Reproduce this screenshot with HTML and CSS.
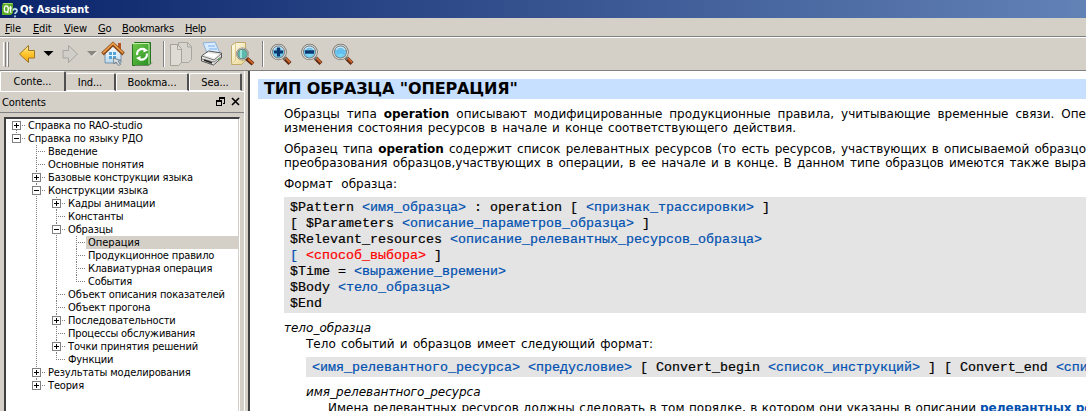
FILE: index.html
```html
<!DOCTYPE html>
<html lang="ru">
<head>
<meta charset="utf-8">
<title>Qt Assistant</title>
<link rel="stylesheet" href="styles.css">
</head>
<body>
<div class="window">
  <header class="titlebar">
    <svg class="app-icon" width="16" height="16" viewBox="0 0 16 16"><path d="M2 1h9v10l-2 2H0V3z" fill="#5fae2b"/><path d="M2 1h9l-2 1H0z" fill="#a5d867"/><ellipse cx="4.3" cy="7" rx="2" ry="3.200" fill="none" stroke="#fff" stroke-width="1.300"/><path d="M4.800 9.500l1.500 1.700M8.500 4v5.500q0 1 1 .7M7 6h3" fill="none" stroke="#fff" stroke-width="1.200"/><path d="M10.800 8.300q2-2.600 4-.6q.8 1.700-1 2.900q-.8.600-.8 1.500M13 13.600v1.600" fill="none" stroke="#4c7ca8" stroke-width="2.200"/><path d="M10.800 8.300q2-2.600 4-.6q.8 1.700-1 2.900q-.8.600-.8 1.500M13 13.600v1.600" fill="none" stroke="#e4f3fb" stroke-width="1.100"/></svg>
    <span class="app-title">Qt Assistant</span>
  </header>
  <nav class="menubar">
    <span class="m-file"><u>F</u>ile</span><span class="m-edit"><u>E</u>dit</span><span class="m-view"><u>V</u>iew</span><span class="m-go"><u>G</u>o</span><span class="m-book"><u>B</u>ookmarks</span><span class="m-help"><u>H</u>elp</span>
  </nav>
  <div class="toolbar">
    <svg width="360" height="32" viewBox="0 38 360 32">
      <defs>
        <linearGradient id="gold" x1="0" y1="0" x2="0" y2="1"><stop offset="0" stop-color="#fff0a0"/><stop offset=".5" stop-color="#ffc52c"/><stop offset="1" stop-color="#f5a40c"/></linearGradient>
        <linearGradient id="green" x1="0" y1="0" x2="1" y2="1"><stop offset="0" stop-color="#73cb4b"/><stop offset="1" stop-color="#238c20"/></linearGradient>
        <linearGradient id="sheet" x1="0" y1="0" x2="1" y2="1"><stop offset="0" stop-color="#fffdf0"/><stop offset="1" stop-color="#ead68c"/></linearGradient>
        <linearGradient id="wall" x1="0" y1="0" x2="0" y2="1"><stop offset="0" stop-color="#fff"/><stop offset="1" stop-color="#b9d8ee"/></linearGradient>
        <radialGradient id="lens" cx=".5" cy=".65" r=".65"><stop offset="0" stop-color="#7ce0fa"/><stop offset="1" stop-color="#6aa9d8"/></radialGradient>
        <g id="magnifier">
          <path d="M14.500 15l5.500 5.500" stroke="#5e2a12" stroke-width="4.200"/>
          <path d="M15 14.500l5 5" stroke="#c9662f" stroke-width="2"/>
          <path d="M12.500 13l3 3" stroke="#777" stroke-width="3"/>
          <circle cx="8.500" cy="9" r="7" fill="url(#lens)" stroke="#706f6b" stroke-width="2.600"/>
          <circle cx="8.500" cy="9" r="7" fill="none" stroke="#d8d7d2" stroke-width="1.200"/>
          <path d="M4 7a5 5 0 0 1 9 0" fill="none" stroke="#c7e6f7" stroke-width="1.200"/>
        </g>
      </defs>
      <g shape-rendering="crispEdges"><path d="M3.500 42v24M7.500 42v24" stroke="#fff"/><path d="M5.500 42v25M8.500 42v25" stroke="#808080"/><path d="M163.500 41v26M262.500 41v26" stroke="#808080"/><path d="M164.500 41v26M263.500 41v26" stroke="#fff"/></g>
      <path d="M19.500 54l9-8.500v5h6v7.500h-6v4.500z" fill="url(#gold)" stroke="#9b7424" stroke-linejoin="round"/>
      <path d="M43.500 51h10l-5 5z" fill="#000"/>
      <path d="M77.500 54l-9-8.500v5h-5.500v7.500h5.500v4.500z" fill="#d0cec9" stroke="#a7a5a0" stroke-linejoin="round"/>
      <path d="M87 51h10l-5 5z" fill="#8a8780"/><path d="M92 56.500l5-5" stroke="#fff"/>
      <path d="M105 52v11h16V52l-8-7z" fill="url(#wall)" stroke="#7893ab"/>
      <path d="M118 43h3v7l-3-3z" fill="#b85423"/>
      <path d="M102.500 54l10.500-10 10.500 10" fill="none" stroke="#8b4a1c" stroke-width="3.800"/>
      <path d="M103 53l10-9.500 10 9.500" fill="none" stroke="#eda047" stroke-width="1.700"/>
      <path d="M109 52h7v7h-7z" fill="#54a1d5"/><path d="M112.500 51v9M108 55.500h9" stroke="#e8f7ff"/>
      <path d="M113 58l1 6 2-2 2.500 3.500 2-1-2.500-3.500 3-.5z" fill="#d6dce1" stroke="#65717a" stroke-width=".8"/>
      <path d="M132.500 44.500l2-2h16v21l-2 2h-16z" fill="url(#green)" stroke="#25751f"/>
      <path d="M149 44v20.500M133 43.500h16" stroke="#c3ecaa"/><path d="M135 65.500h14l3-3" fill="none" stroke="#6b8263"/>
      <path d="M137.200 55a5 5 0 0 1 7.500-5.300M146.800 53.500a5 5 0 0 1-7.500 5.300" fill="none" stroke="#fff" stroke-width="2"/><path d="M143.500 47.500l4.500 3-4.500 2zM140.500 61l-4.500-3 4.500-2z" fill="#fff"/>
      <path d="M178.500 42.500h9l4 4v13l-3 3h-10z" fill="#d7d4ce" stroke="#aaa7a1"/><path d="M170.500 44.500h7l4 4v14l-3 3h-8z" fill="#dedbd5" stroke="#a5a29c"/><path d="M177.500 44.500v5h4M187.500 43v4h4" fill="none" stroke="#aaa7a1"/>
      <path d="M203 43l12-1 5 11-12 2z" fill="#d8ecff" stroke="#7ca3d4" stroke-width=".8"/><path d="M208 46h7M209 49h8" stroke="#7baee7"/>
      <path d="M201.500 56l7-5 13 2v5l-8 7-12-4z" fill="#e8e8e4" stroke="#555"/><path d="M202 56l12 4 7-6M202 59l12 3 7-5" fill="none" stroke="#77777a"/><path d="M207 53l12 2-5 3-10-3z" fill="#fff"/><path d="M204 60l8 3" stroke="#222" stroke-width="1.500"/><path d="M218 59h2" stroke="#47a947" stroke-width="1.500"/>
      <path d="M231.500 45.500l4-3h10v18l-4 4h-10z" fill="url(#sheet)" stroke="#bea968"/><path d="M235.500 43v17l-4 4" fill="none" stroke="#e0ca8b"/>
      <path d="M246 58l7 6" stroke="#5d260d" stroke-width="4.200"/><path d="M248 59l5 4.500" stroke="#d26428" stroke-width="2"/><circle cx="242.500" cy="54" r="5.500" fill="#5cb9ad" stroke="#777770" stroke-width="2"/><circle cx="242.500" cy="54" r="5.700" fill="none" stroke="#d3d1ca" stroke-width=".8"/><path d="M241 50v8" stroke="#a3e3dc" stroke-width="2"/>
      <use href="#magnifier" x="270" y="43"/><use href="#magnifier" x="301" y="43"/><use href="#magnifier" x="332" y="43"/>
      <path d="M278.500 47.500v9M274 52h9" stroke="#08366d" stroke-width="3.200"/><path d="M305 52h9" stroke="#08366d" stroke-width="3.400"/><path d="M336.500 52h8" stroke="#62bff0" stroke-width="4"/>
    </svg>
  </div>
  <main class="workspace">
    <aside class="sidebar">
      <div class="tabs"><span class="tab active">Conte...</span><span class="tab t-index">Ind...</span><span class="tab t-book">Bookma...</span><span class="tab t-search">Sea...</span></div>
      <div class="dock-title"><span>Contents</span>
        <svg width="24" height="10" viewBox="0 0 24 10" shape-rendering="crispEdges"><path d="M3.500 4V1.500h5V6H7M3 1h6M.5 4.500h5v4h-5zM0 4h6" fill="none" stroke="#000"/><path d="M3 0h6v2H3zM0 3h6v2H0z"/><path d="M16 1l7 7M23 1l-7 7" stroke="#000" stroke-width="1.600" shape-rendering="auto"/></svg>
      </div>
      <div class="tree">
        <ul class="root">
          <li><div class="row"><i class="box plus"></i><span>Справка по RAO-studio</span></div></li>
          <li><div class="row"><i class="box"></i><span>Справка по языку РДО</span></div>
            <ul>
              <li><div class="row"><span>Введение</span></div></li>
              <li><div class="row"><span>Основные понятия</span></div></li>
              <li><div class="row"><i class="box plus"></i><span>Базовые конструкции языка</span></div></li>
              <li><div class="row"><i class="box"></i><span>Конструкции языка</span></div>
                <ul>
                  <li><div class="row"><i class="box plus"></i><span>Кадры анимации</span></div></li>
                  <li><div class="row"><span>Константы</span></div></li>
                  <li><div class="row"><i class="box"></i><span>Образцы</span></div>
                    <ul>
                      <li><div class="row selected"><span>Операция</span></div></li>
                      <li><div class="row"><span>Продукционное правило</span></div></li>
                      <li><div class="row"><span>Клавиатурная операция</span></div></li>
                      <li><div class="row"><span>События</span></div></li>
                    </ul>
                  </li>
                  <li><div class="row"><span>Объект описания показателей</span></div></li>
                  <li><div class="row"><span>Объект прогона</span></div></li>
                  <li><div class="row"><i class="box plus"></i><span>Последовательности</span></div></li>
                  <li><div class="row"><span>Процессы обслуживания</span></div></li>
                  <li><div class="row"><i class="box plus"></i><span>Точки принятия решений</span></div></li>
                  <li><div class="row"><span>Функции</span></div></li>
                </ul>
              </li>
              <li><div class="row"><i class="box plus"></i><span>Результаты моделирования</span></div></li>
              <li><div class="row"><i class="box plus"></i><span>Теория</span></div></li>
            </ul>
          </li>
        </ul>
      </div>
    </aside>
    <article class="page">
      <h1><span>ТИП ОБРАЗЦА "ОПЕРАЦИЯ"</span></h1>
      <div class="para p1"><div class="line l1">Образцы типа <b>operation</b> описывают модифицированные продукционные правила, учитывающие временные связи. Опе</div><div class="line l2">изменения состояния ресурсов в начале и конце соответствующего действия.</div></div>
      <div class="para p2"><div class="line l3">Образец типа <b>operation</b> содержит список релевантных ресурсов (то есть ресурсов, участвующих в описываемой образцо</div><div class="line l4">преобразования образцов,участвующих в операции, в ее начале и в конце. В данном типе образцов имеются также выра</div></div>
      <div class="para p3"><div class="line l5">Формат образца:</div></div>
<pre class="code">$Pattern <a>&lt;имя_образца&gt;</a> : operation [ <a>&lt;признак_трассировки&gt;</a> ]
[ $Parameters <a>&lt;описание_параметров_образца&gt;</a> ]
$Relevant_resources <a>&lt;описание_релевантных_ресурсов_образца&gt;</a>
<a>[</a> <em>&lt;способ_выбора&gt;</em> ]
$Time = <a>&lt;выражение_времени&gt;</a>
$Body <a>&lt;тело_образца&gt;</a>
$End</pre>
      <div class="term"><div class="line l6">тело_образца</div></div>
      <div class="def">
        <div class="line l7">Тело событий и образцов имеет следующий формат:</div>
<pre class="code wide"><a>&lt;имя_релевантного_ресурса&gt;</a> <a>&lt;предусловие&gt;</a> [ Convert_begin <a>&lt;список_инструкций&gt;</a> ] [ Convert_end <a>&lt;спи</a></pre>
        <div class="term inner"><div class="line l8">имя_релевантного_ресурса</div></div>
        <div class="def last"><div class="line l9">Имена релевантных ресурсов должны следовать в том порядке, в котором они указаны в описании</div><b class="link">релевантных ре</b></div>
      </div>
    </article>
  </main>
</div>
</body>
</html>
```
FILE: styles.css
```css
* { box-sizing: border-box; }
body { margin: 0; width: 1086px; height: 411px; overflow: hidden; background: #d4d0c8; color: #000; font: 11px/13px "DejaVu Sans Condensed", "DejaVu Sans", sans-serif; }
.window { display: flex; flex-direction: column; height: 411px; }
.titlebar { flex: none; height: 18px; display: flex; align-items: center; gap: 2px; padding-left: 2px; background: linear-gradient(90deg, #0a246a, #a6caf0) 0 0 / 1920px 100%; color: #fff; font-weight: bold; letter-spacing: .05px; }
.app-icon { margin-top: 1px; }
.menubar { flex: none; height: 19px; display: flex; padding: 4px 0 0 5px; border-bottom: 1px solid #808080; white-space: nowrap; letter-spacing: -.15px; }
.menubar u { text-underline-offset: 1px; }
.m-file { width: 28px; } .m-edit { width: 31px; } .m-view { width: 34px; } .m-go { width: 24px; } .m-book { width: 63px; }
.m-book, .m-help { letter-spacing: -.4px; }
.toolbar { flex: none; height: 34px; border-top: 1px solid #fff; border-bottom: 1px solid #808080; }
.toolbar svg { display: block; }
.workspace { flex: 1; min-height: 0; display: flex; }
.sidebar { flex: none; width: 248px; display: flex; flex-direction: column; padding-right: 3px; background: linear-gradient(#fff, #fff) 244px 0 / 1px 100% no-repeat; }
.tabs { flex: none; height: 21px; display: flex; align-items: flex-end; border-bottom: 1px solid #fff; letter-spacing: -.1px; }
.tab { height: 18px; padding-top: 2px; text-align: center; border-top: 1px solid #fff; border-left: 1px solid #fff; border-right: 2px solid #505050; border-radius: 2px 2px 0 0; border-bottom: 1px solid #fff; }
.tab.active { width: 66px; height: 20px; padding-top: 3px; border-bottom: 0; }
.t-index { width: 50px; border-left: 0; } .t-book { width: 73px; } .t-search { width: 53px; }
.dock-title { flex: none; height: 21px; display: flex; justify-content: space-between; align-items: center; margin-right: 1px; padding: 0 4px 0 2px; border-bottom: 1px solid #808080; letter-spacing: -.1px; }
.tree { flex: 1; margin: 4px 5px 0 4px; background: #fff; border: solid #404040; border-width: 2px 0 0 2px; border-right: 1px solid #fff; overflow: hidden; }
.tree ul { list-style: none; margin: 0; padding: 0 0 0 20px; }
.tree .root { padding: 0 0 0 6px; border-right: 1px solid #d4d0c8; height: 100%; }
.tree li { background: repeating-linear-gradient(#808080 0 1px, transparent 1px 2px) 4px 0 / 1px 100% no-repeat; }
.tree li:last-child { background-size: 1px 7px; }
.root > li:first-child { background-position: 4px 7px; }
.row { height: 13px; display: flex; white-space: nowrap; letter-spacing: -.15px; background: repeating-linear-gradient(90deg, #808080 0 1px, transparent 1px 2px) 4px 6px / 9px 1px no-repeat; }
.row span { flex: 1; margin-left: 14px; padding-left: 2px; }
.row.selected span { background: #d4d0c8; letter-spacing: 0; }
.box { flex: none; width: 9px; height: 9px; margin-top: 2px; border: 1px solid #808080; background: linear-gradient(#000, #000) center / 5px 1px no-repeat, #fff; }
.box.plus { background: linear-gradient(#000, #000) center / 5px 1px no-repeat, linear-gradient(#000, #000) center / 1px 5px no-repeat, #fff; }
.box + span { margin-left: 5px; }
.page { flex: 1; min-width: 0; overflow: hidden; background: #fff; border-left: 2px solid #404040; padding: 8px 0 0 8px; font: 12px/14px "DejaVu Sans", sans-serif; white-space: nowrap; }
h1 { margin: 0; height: 20px; padding-left: 6px; background: #c8e0ff; font-size: 16px; line-height: 20px; letter-spacing: -.13px; }
.line { text-align: justify; text-align-last: justify; }
.l2 { width: 512px; } .l5 { width: 113px; } .l7 { width: 347px; } .l9 { flex: none; width: 648px; }
.para, .term, .code { margin-left: 26px; }
.p1 { margin-top: 8px; } .p2 { margin-top: 7px; } .p3 { margin-top: 7px; }
.code { margin-top: 6px; margin-bottom: 0; height: 116px; padding: 3px 6px 0; background: #e4e4e4; font: 13.333px/16px "Liberation Mono", monospace; -webkit-text-stroke: .2px; }
.code a, .link { color: #0050b0; }
.code em { color: #f00; font-style: normal; }
.term { margin-top: 8px; font-style: italic; }
.def { margin-left: 48px; margin-top: 2px; }
.def .code { height: 20px; margin-left: 0; margin-top: 6px; }
.term.inner { margin-left: 0; }
.def .def { margin-left: 22px; }
.last { display: flex; gap: 4px; }
```
